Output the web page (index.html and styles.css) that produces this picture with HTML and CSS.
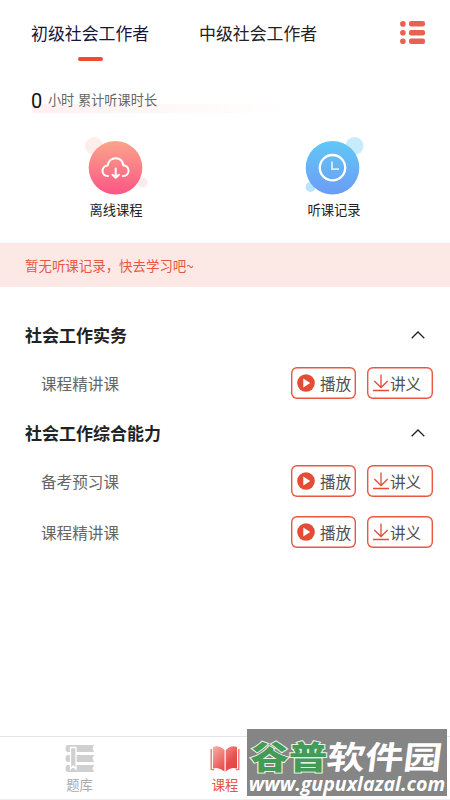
FILE: index.html
```html
<!DOCTYPE html>
<html lang="zh-CN">
<head>
<meta charset="utf-8">
<meta name="viewport" content="width=device-width">
<title>课程</title>
<link rel="stylesheet" href="styles.css">
</head>
<body>
<svg class="defs" width="0" height="0" aria-hidden="true">
  <symbol id="play" viewBox="0 0 18 18"><circle cx="9" cy="9" r="8.8" fill="#e54c35"/><path d="M6.3 4.6v8.8L13.2 9z" fill="#fff"/></symbol>
  <symbol id="download" viewBox="0 0 18 18"><path d="M9 .5v13M2.300 7 9 13.500l6.700-6.500M1 16.500h16" fill="none" stroke="#e54c35" stroke-width="1.300"/></symbol>
  <symbol id="chevron" viewBox="0 0 14 8"><path d="M.7 7.200 7 1l6.300 6.200" fill="none" stroke="#222" stroke-width="1.300"/></symbol>
</svg>
<div class="app">
  <header class="tabs">
    <div class="tab active">初级社会工作者</div>
    <div class="tab">中级社会工作者</div>
    <svg class="menu" viewBox="0 0 25 24" fill="#e96150"><circle cx="2.900" cy="2.900" r="2.800"/><circle cx="2.900" cy="11.700" r="2.800"/><circle cx="2.900" cy="20.300" r="2.800"/><rect x="9" y="0" width="16" height="5.600" rx="2"/><rect x="9" y="8.900" width="16" height="5.600" rx="2"/><rect x="9" y="17.500" width="16" height="5.600" rx="2"/></svg>
  </header>
  <div class="stat"><b>0</b><span>小时</span><span>累计听课时长</span></div>
  <section class="shortcuts">
    <div class="shortcut">
      <svg viewBox="0 0 72 64"><defs><linearGradient id="pink" x2="0" y2="1"><stop stop-color="#faa58b"/><stop offset="1" stop-color="#fc5684"/></linearGradient></defs><circle cx="14" cy="10" r="9" fill="#fdeeeb"/><circle cx="62.500" cy="46.500" r="5" fill="#fdeaea"/><circle cx="35.500" cy="31.700" r="26.800" fill="url(#pink)"/><g fill="none" stroke="#fff" stroke-width="2" stroke-linecap="round" stroke-linejoin="round"><path d="M28 40c-3.500.3-5.500-2.200-5.500-5 0-3.200 2.300-5.400 5.200-5.600.6-4.300 3.800-7.100 8-7.100 4.100 0 7 2.700 7.600 7 3.200.4 5.200 2.700 5.200 5.600 0 3-2 5.200-5.500 5.100"/><path d="M35.700 32.500v9M32.500 38.700l3.200 3 3.200-3"/></g></svg>
      <span>离线课程</span>
    </div>
    <div class="shortcut">
      <svg viewBox="0 0 72 64"><defs><linearGradient id="blue" x2="0" y2="1"><stop stop-color="#60c8f6"/><stop offset="1" stop-color="#6c9cf6"/></linearGradient></defs><circle cx="56.500" cy="10" r="9" fill="#c7ebff"/><circle cx="12.500" cy="51" r="5" fill="#bae4fc"/><circle cx="34.500" cy="31.700" r="26.800" fill="url(#blue)"/><circle cx="34.500" cy="31.700" r="12.700" fill="none" stroke="#fff" stroke-width="2.300"/><path d="M34 25.500v7.700h7" fill="none" stroke="#d5efff" stroke-width="1.800"/></svg>
      <span>听课记录</span>
    </div>
  </section>
  <div class="notice">暂无听课记录，快去学习吧~</div>
  <main class="courses">
    <div class="group"><h2>社会工作实务</h2><svg class="chevron"><use href="#chevron"/></svg></div>
    <div class="lesson"><span>课程精讲课</span><div class="btn"><svg><use href="#play"/></svg>播放</div><div class="btn notes"><svg><use href="#download"/></svg>讲义</div></div>
    <div class="group"><h2>社会工作综合能力</h2><svg class="chevron"><use href="#chevron"/></svg></div>
    <div class="lesson"><span>备考预习课</span><div class="btn"><svg><use href="#play"/></svg>播放</div><div class="btn notes"><svg><use href="#download"/></svg>讲义</div></div>
    <div class="lesson"><span>课程精讲课</span><div class="btn"><svg><use href="#play"/></svg>播放</div><div class="btn notes"><svg><use href="#download"/></svg>讲义</div></div>
  </main>
  <nav class="bottom">
    <div class="nav-item">
      <svg viewBox="0 0 30 28"><g fill="#d0d0d0"><path d="M3 0h26l-1.500 3.500L29 7H3Q.5 7 .5 3.500T3 0zM3 10h26l-1.500 3.500L29 17H3Q.5 17 .5 13.500T3 10zM3 20h26l-1.500 3.500L29 27H3Q.5 27 .5 23.500T3 20z"/><path d="M5.500 2.500h5.500v21.500l-2.750-3L5.500 24z" stroke="#fff" stroke-width="1.300"/></g></svg>
      <span>题库</span>
    </div>
    <div class="nav-item on">
      <svg viewBox="0 0 30 28"><defs><linearGradient id="book" x2="1" y2="1"><stop stop-color="#f8b0a9"/><stop offset=".65" stop-color="#e94e4b"/><stop offset="1" stop-color="#e43c3e"/></linearGradient></defs><path d="M3 2Q9-.5 14.500 5v21.500Q9 21.500 3 23.500zM15.700 5Q21-.5 27 2v21.500Q21 21.500 15.700 26.500z" fill="url(#book)"/><path d="M1.200 4V24.300l3 .5M28.800 4V24.300l-3 .5" fill="none" stroke="#ec6b64" stroke-width="1.300"/></svg>
      <span>课程</span>
    </div>
  </nav>
  <div class="stamp">
    <div class="stamp-name"><em>谷普</em><i>软件园</i></div>
    <div class="stamp-url">www.gupuxlazal.com</div>
  </div>
</div>
</body>
</html>
```
FILE: styles.css
```css
* { box-sizing: border-box; }
body { margin: 0; background: #fff; font-family: "Noto Sans CJK SC", sans-serif; color: #222; }
.defs { position: absolute; }
.app { position: relative; display: flex; flex-direction: column; width: 450px; height: 800px; overflow: hidden; }
svg { display: block; flex: none; }

.tabs { display: flex; align-items: flex-start; height: 88px; padding: 20px 25px 0 31px; }
.tab { width: 168px; font-size: 16.900px; line-height: 26px; white-space: nowrap; }
.tab.active { color: #15153f; }
.tab.active::after { content: ""; display: block; width: 25px; height: 4px; margin: 11px 0 0 47px; border-radius: 2px; background: #f04a31; }
.menu { width: 25px; height: 24px; margin-left: auto; margin-top: 1px; }

.stat { display: flex; align-items: center; width: 260px; height: 25px; margin-left: 32px; gap: 4px; font-size: 13.200px; line-height: 24px; color: #666; background: linear-gradient(90deg, #fff0f0, #fff) 0 16px / 260px 9px no-repeat; border-radius: 0 0 0 3px; }
.stat b { font: 20px/24px Roboto, sans-serif; color: #111; margin: 0 0 0 -1px; width: 13px; }
.stat span { position: relative; top: -1px; }
.stat b + span { letter-spacing: -.2px; }

.shortcuts { display: flex; height: 130px; padding: 23px 8px 0 8px; }
.shortcut { flex: 1; display: flex; flex-direction: column; align-items: center; font-size: 13.300px; line-height: 20px; }
.shortcut:last-child { padding-left: 2px; }
.shortcut svg { width: 72px; height: 64px; }

.notice { height: 44px; padding-left: 25px; background: #fce9e5; color: #e75843; font-size: 13.450px; line-height: 45px; }

.courses { flex: 1; padding: 24px 17px 0 25px; }
.group { display: flex; align-items: center; justify-content: space-between; height: 47px; padding-right: 8px; }
.group h2 { margin: 0; font-size: 17px; line-height: 26px; font-weight: 700; }
.chevron { width: 14px; height: 8px; }
.lesson { display: flex; align-items: center; height: 51px; padding-left: 16px; font-size: 15.600px; color: #666; }
.lesson > span { flex: 1; margin-top: -2px; }
.btn { display: flex; align-items: center; gap: 5px; width: 65px; height: 32px; margin-top: -1px; padding: 0 0 1px 6px; box-shadow: inset 0 0 0 1.400px #e95641; border-radius: 6px; color: #505050; font-size: 15.600px; line-height: 30px; white-space: nowrap; }
.btn svg { width: 18px; height: 18px; }
.btn.notes { width: 66px; margin-left: 11px; padding-left: 5px; gap: 0; }

.bottom { display: grid; grid-template-columns: 159px 132px; height: 64px; border-top: 1px solid #e4e4e4; border-bottom: 1px solid #eee; }
.nav-item { display: flex; flex-direction: column; align-items: center; padding-top: 8px; font-size: 13.300px; line-height: 20px; color: #aaa; }
.nav-item svg { width: 30px; height: 28px; }
.nav-item span { margin-top: 2px; }
.nav-item.on { color: #e75443; }

.stamp { position: absolute; left: 247px; top: 729px; width: 200px; height: 67px; background: #858585; color: #fff; white-space: nowrap; overflow: hidden; }
.stamp-name { display: flex; width: 166px; height: 46px; padding: 3px 0 0 3px; font-size: 32px; line-height: 46px; font-weight: 900; transform: scaleX(1.200); transform-origin: 0 0; }
.stamp-name em, .stamp-name i { display: block; font-style: normal; }
.stamp-name em { color: #439b57; -webkit-text-stroke: 2px #e4f2e6; paint-order: stroke fill; }
.stamp-name i { font-weight: 700; transform: skewX(-6deg); }
.stamp-url { height: 21px; font: italic 700 19.600px/17px "Open Sans", sans-serif; text-align: center; }
```
